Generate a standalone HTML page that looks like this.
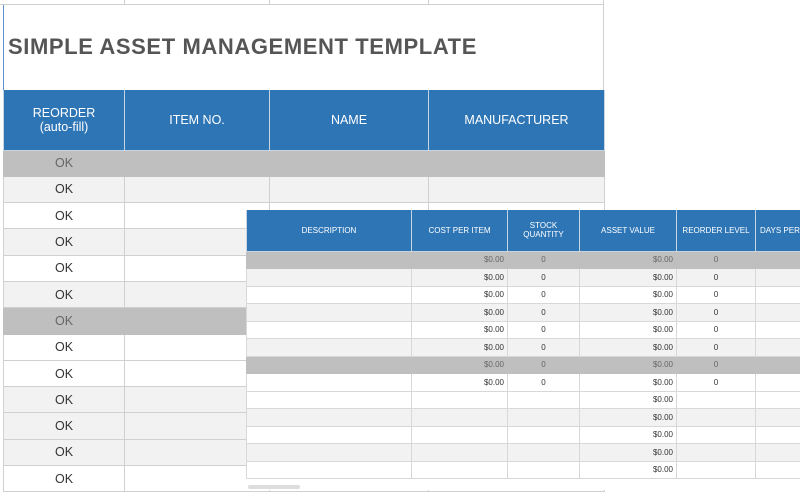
<!DOCTYPE html>
<html><head><meta charset="utf-8"><style>
body{margin:0;width:800px;height:500px;overflow:hidden;background:#fff;font-family:"Liberation Sans",sans-serif;position:relative}
table{border-collapse:collapse;position:absolute;table-layout:fixed}
td{padding:0;border:1px solid #d0d0d0;text-align:center;color:#333}
.h td{background:#2e75b6;color:#fff;border-color:#c8d4e0;border-top:none}
.g td{background:#bfbfbf;color:#666;border-color:#bfbfbf}
.l td{background:#f2f2f2}
.w td{background:#fff}
#back{left:3px;top:90px;font-size:12.5px;width:601px}
#back tr{height:26.3px}
#ov{left:246px;top:210px;font-size:8px;width:569px}
#ov tr{height:17.5px}
#ov td{border-color:#d8d8d8}
#ov .h td{border-color:#c8d4e0}
#ov .g td{border-color:#bfbfbf}
#ov td.r{text-align:right;padding-right:3px}
</style></head><body>
<div style="position:absolute;left:0;top:0;width:604px;height:4px;border-bottom:1px solid #d0d0d0"></div>
<div style="position:absolute;left:124px;top:0;width:1px;height:4px;background:#d0d0d0"></div>
<div style="position:absolute;left:269px;top:0;width:1px;height:4px;background:#d0d0d0"></div>
<div style="position:absolute;left:428px;top:0;width:1px;height:4px;background:#d0d0d0"></div>
<div style="position:absolute;left:603px;top:0;width:1px;height:90px;background:#d0d0d0"></div>
<div style="position:absolute;left:3px;top:5px;width:1px;height:85px;background:#5b8fd0"></div>
<div style="position:absolute;left:8px;top:34px;font-size:22px;font-weight:bold;color:#555;letter-spacing:0.6px;white-space:nowrap">SIMPLE ASSET MANAGEMENT TEMPLATE</div>
<table id="back">
<colgroup><col style="width:121px"><col style="width:145px"><col style="width:159px"><col style="width:176px"></colgroup>
<tr class="h" style="height:60px"><td>REORDER<br>(auto-fill)</td><td>ITEM NO.</td><td>NAME</td><td>MANUFACTURER</td></tr>
<tr class="g"><td>OK</td><td></td><td></td><td></td></tr>
<tr class="l"><td>OK</td><td></td><td></td><td></td></tr>
<tr class="w"><td>OK</td><td></td><td></td><td></td></tr>
<tr class="l"><td>OK</td><td></td><td></td><td></td></tr>
<tr class="w"><td>OK</td><td></td><td></td><td></td></tr>
<tr class="l"><td>OK</td><td></td><td></td><td></td></tr>
<tr class="g"><td>OK</td><td></td><td></td><td></td></tr>
<tr class="w"><td>OK</td><td></td><td></td><td></td></tr>
<tr class="w"><td>OK</td><td></td><td></td><td></td></tr>
<tr class="l"><td>OK</td><td></td><td></td><td></td></tr>
<tr class="l"><td>OK</td><td></td><td></td><td></td></tr>
<tr class="l"><td>OK</td><td></td><td></td><td></td></tr>
<tr class="w"><td>OK</td><td></td><td></td><td></td></tr>
</table>
<div style="position:absolute;left:246px;top:210px;width:554px;height:280px;background:#fff"></div>
<table id="ov">
<colgroup><col style="width:165px"><col style="width:96px"><col style="width:72px"><col style="width:97px"><col style="width:79px"><col style="width:60px"></colgroup>
<tr class="h" style="height:41px"><td>DESCRIPTION</td><td>COST PER ITEM</td><td>STOCK<br>QUANTITY</td><td>ASSET VALUE</td><td>REORDER LEVEL</td><td style="text-align:left;padding-left:4px;white-space:nowrap">DAYS PER</td></tr>
<tr class="g"><td></td><td class="r">$0.00</td><td>0</td><td class="r">$0.00</td><td>0</td><td></td></tr>
<tr class="l"><td></td><td class="r">$0.00</td><td>0</td><td class="r">$0.00</td><td>0</td><td></td></tr>
<tr class="w"><td></td><td class="r">$0.00</td><td>0</td><td class="r">$0.00</td><td>0</td><td></td></tr>
<tr class="l"><td></td><td class="r">$0.00</td><td>0</td><td class="r">$0.00</td><td>0</td><td></td></tr>
<tr class="w"><td></td><td class="r">$0.00</td><td>0</td><td class="r">$0.00</td><td>0</td><td></td></tr>
<tr class="l"><td></td><td class="r">$0.00</td><td>0</td><td class="r">$0.00</td><td>0</td><td></td></tr>
<tr class="g"><td></td><td class="r">$0.00</td><td>0</td><td class="r">$0.00</td><td>0</td><td></td></tr>
<tr class="w"><td></td><td class="r">$0.00</td><td>0</td><td class="r">$0.00</td><td>0</td><td></td></tr>
<tr class="w"><td></td><td></td><td></td><td class="r">$0.00</td><td></td><td></td></tr>
<tr class="l"><td></td><td></td><td></td><td class="r">$0.00</td><td></td><td></td></tr>
<tr class="w"><td></td><td></td><td></td><td class="r">$0.00</td><td></td><td></td></tr>
<tr class="l"><td></td><td></td><td></td><td class="r">$0.00</td><td></td><td></td></tr>
<tr class="w"><td></td><td></td><td></td><td class="r">$0.00</td><td></td><td></td></tr>
</table>
<div style="position:absolute;left:246px;top:483px;width:554px;height:7px;background:#fff"></div>
<div style="position:absolute;left:248px;top:485px;width:52px;height:4px;background:#ddd;border-radius:2px"></div>
</body></html>
